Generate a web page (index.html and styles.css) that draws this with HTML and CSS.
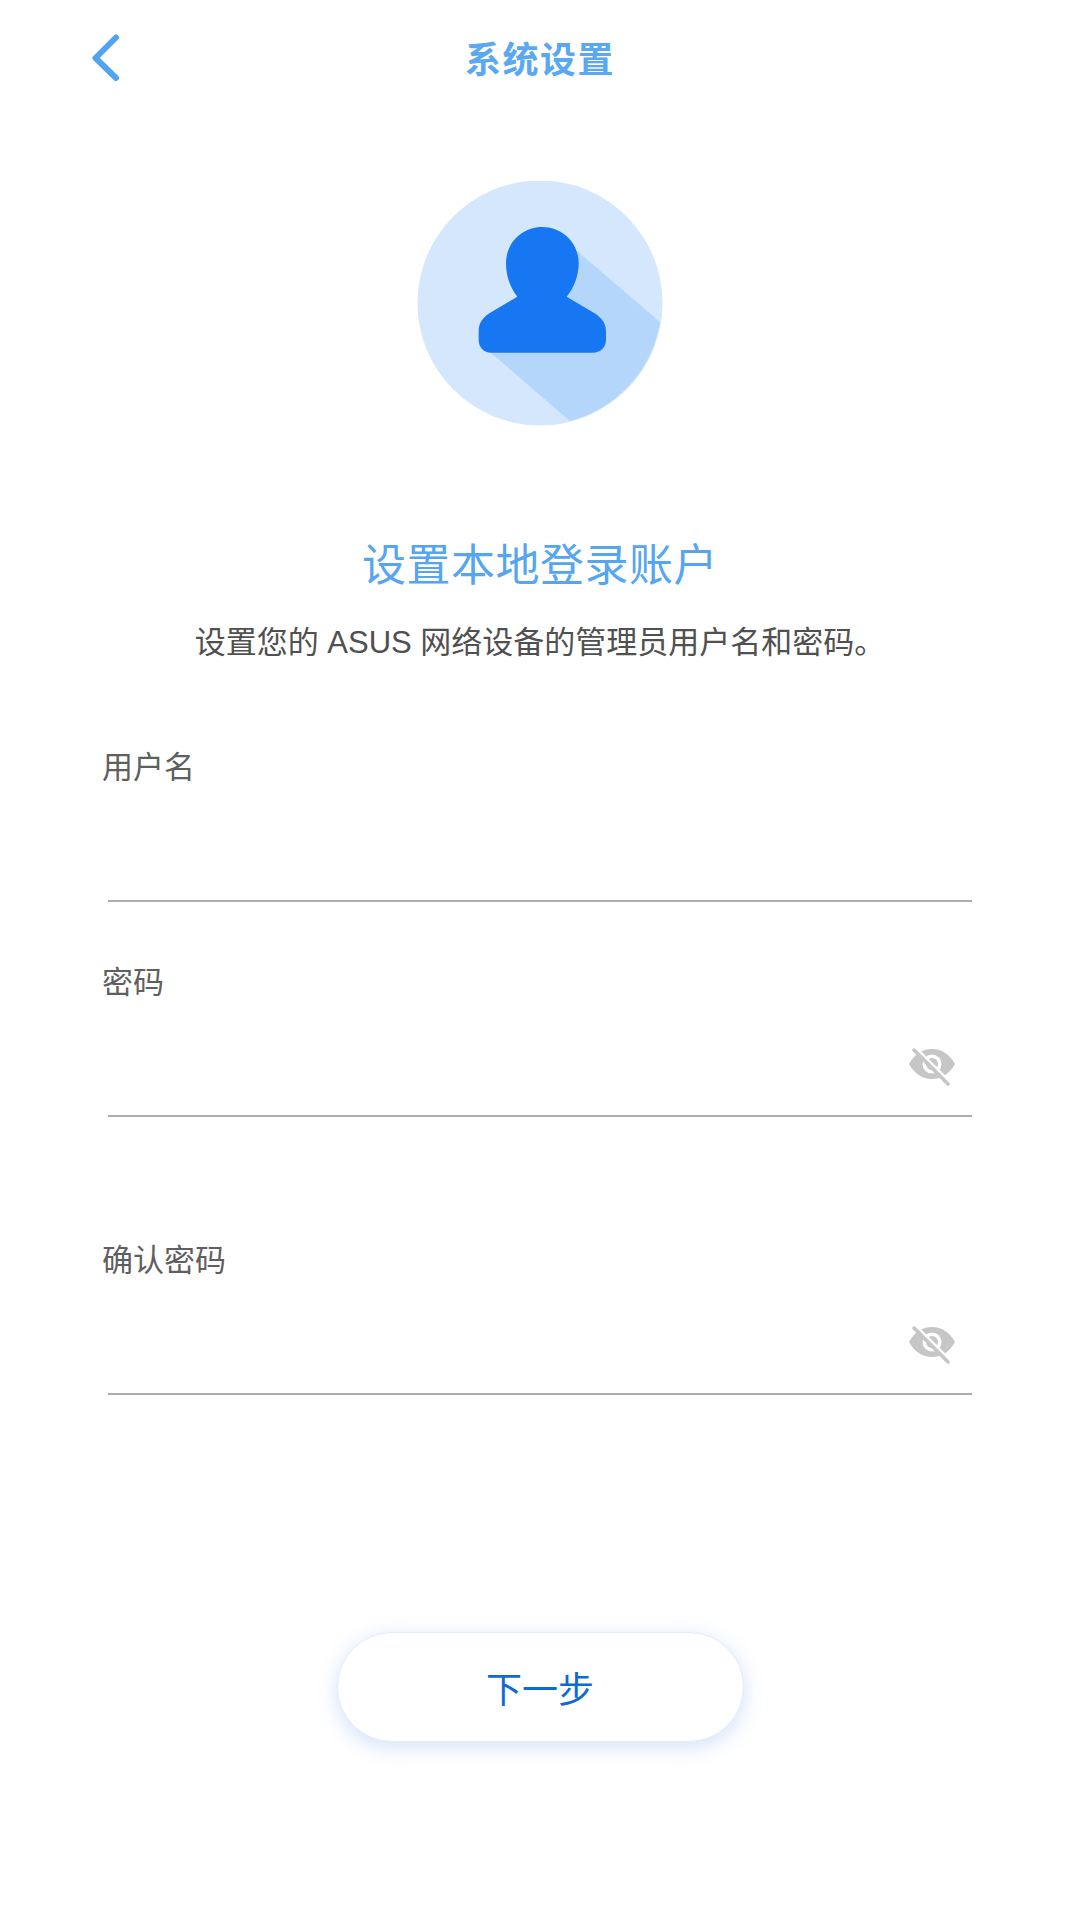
FILE: index.html
```html
<!DOCTYPE html>
<html lang="zh-CN">
<head>
    <meta charset="UTF-8">
    <meta name="viewport" content="width=device-width, initial-scale=1.0">
    <title>系统设置</title>
    <link rel="stylesheet" href="styles.css">
</head>
<body>
    <div class="header">
        <button class="back-btn" type="button" aria-label="返回">
            <svg width="30" height="52" viewBox="0 0 30 52">
                <path d="M26 6.500 L5.500 27 L26 47" fill="none" stroke="#52a4f1" stroke-width="6" stroke-linecap="round" stroke-linejoin="round"/>
            </svg>
        </button>
        <div class="page-title">系统设置</div>
    </div>

    <div class="avatar">
        <svg width="246" height="246" viewBox="0 0 246 246">
            <circle cx="123" cy="122" r="122.500" fill="#d4e7fc"/>
            <path d="M160 70 L243 141 A122.500 122.500 0 0 1 153 240 L73 171 Z" fill="#b5d6fb"/>
            <path d="M125.300 46 C145.500 46 161.700 62 161.700 82 C161.700 96 156 108 149.700 115.700 L178 132.500 C185 137 189 143 189 150 V159 C189 166.500 183 171.700 176 171.700 H74 C67 171.700 61.700 166.500 61.700 159 V150 C61.700 143 65 137 72 132.500 L100.300 115.700 C94 108 89 96 89 82 C89 62 105 46 125.300 46 Z" fill="#1776f2"/>
        </svg>
    </div>

    <h1 class="heading">设置本地登录账户</h1>
    <p class="desc">设置您的 ASUS 网络设备的管理员用户名和密码。</p>

    <form class="form">
        <div class="field">
            <label class="field-label" for="username">用户名</label>
            <div class="field-row">
                <input id="username" type="text">
            </div>
        </div>
        <div class="field">
            <label class="field-label" for="password">密码</label>
            <div class="field-row">
                <input id="password" type="password">
                <svg class="eye" width="48" height="40" viewBox="0 0 48 40">
                    <path d="M1 17 C6 8 14 2 24 2 C34 2 42 8 47 17 C42 26 34 32 24 32 C14 32 6 26 1 17 Z" fill="#c6c6c6"/>
                    <circle cx="24" cy="17" r="9.500" fill="#fff"/>
                    <circle cx="24" cy="17" r="6" fill="#c6c6c6"/>
                    <path d="M8 1 L42 35" stroke="#fff" stroke-width="2.500"/>
                    <path d="M6 3 L40 37" stroke="#c6c6c6" stroke-width="3.500" stroke-linecap="round"/>
                </svg>
            </div>
        </div>
        <div class="field">
            <label class="field-label" for="confirm">确认密码</label>
            <div class="field-row">
                <input id="confirm" type="password">
                <svg class="eye" width="48" height="40" viewBox="0 0 48 40">
                    <path d="M1 17 C6 8 14 2 24 2 C34 2 42 8 47 17 C42 26 34 32 24 32 C14 32 6 26 1 17 Z" fill="#c6c6c6"/>
                    <circle cx="24" cy="17" r="9.500" fill="#fff"/>
                    <circle cx="24" cy="17" r="6" fill="#c6c6c6"/>
                    <path d="M8 1 L42 35" stroke="#fff" stroke-width="2.500"/>
                    <path d="M6 3 L40 37" stroke="#c6c6c6" stroke-width="3.500" stroke-linecap="round"/>
                </svg>
            </div>
        </div>
    </form>

    <div class="actions">
        <button class="next-btn" type="button">下一步</button>
    </div>
</body>
</html>
```

FILE: styles.css
```css
body {
    margin: 0;
    min-height: 1920px;
    background: #fff;
    font-family: "Liberation Sans", "Noto Sans CJK SC", sans-serif;
}
.header {
    display: grid;
    grid-template-columns: 1fr auto 1fr;
    align-items: center;
    height: 118px;
    padding: 0 90px;
    box-sizing: border-box;
}
.back-btn {
    justify-self: start;
    display: flex;
    padding: 0;
    border: 0;
    background: none;
    margin-top: -5px;
}
.page-title {
    margin-top: -5px;
    font-size: 36px;
    font-weight: 700;
    letter-spacing: 1.500px;
    color: #5aa8f2;
}
.avatar {
    display: flex;
    justify-content: center;
    margin-top: 63px;
}
.heading {
    margin: 109px 0 0;
    font-size: 44px;
    line-height: 60px;
    font-weight: 400;
    letter-spacing: 0.500px;
    text-align: center;
    color: #55a5f1;
}
.desc {
    margin: 27px 0 0;
    font-size: 31px;
    line-height: 40px;
    text-align: center;
    color: #505050;
}
.form {
    margin-top: 85px;
    padding: 0 108px;
}
.field + .field {
    margin-top: 61px;
}
.field:last-child {
    margin-top: 124px;
}
.field-label {
    display: block;
    margin-left: -6px;
    font-size: 31px;
    line-height: 40px;
    color: #5f5f5f;
}
.field-row {
    display: flex;
    align-items: center;
    height: 112px;
    padding-right: 16px;
    border-bottom: 2px solid #adadad;
}
.field-row input {
    flex: 1;
    border: 0;
    outline: 0;
    background: none;
}
.eye {
    margin-top: 16px;
}
.actions {
    display: flex;
    justify-content: center;
    margin-top: 237px;
}
.next-btn {
    width: 407px;
    height: 110px;
    border: 1px solid #e3edfa;
    border-radius: 55px;
    background: #fff;
    box-shadow: 0 5px 20px rgba(80, 140, 235, 0.25);
    font-family: inherit;
    font-size: 36px;
    color: #0f6ad6;
}
```
